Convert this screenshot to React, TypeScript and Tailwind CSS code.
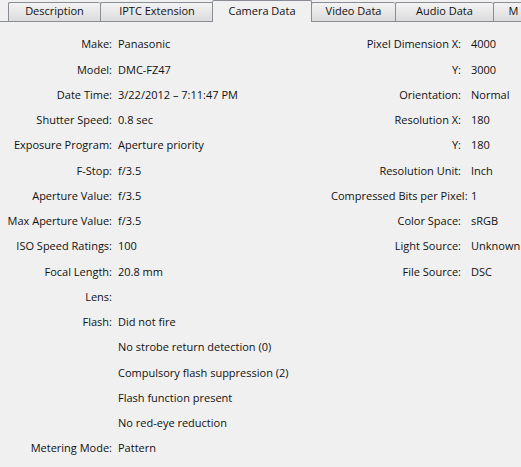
import React from "react";

type Row = { label: string; value: string };

const tabs = [
  { name: "Description", w: "w-[92px]" },
  { name: "IPTC Extension", w: "w-[113px]" },
  { name: "Camera Data", w: "w-[100px]", active: true },
  { name: "Video Data", w: "w-[84px]" },
  { name: "Audio Data", w: "w-[98px]" },
  { name: "M", w: "w-[40px]" },
];

const leftRows: Row[] = [
  { label: "Make:", value: "Panasonic" },
  { label: "Model:", value: "DMC-FZ47" },
  { label: "Date Time:", value: "3/22/2012 \u2013 7:11:47 PM" },
  { label: "Shutter Speed:", value: "0.8 sec" },
  { label: "Exposure Program:", value: "Aperture priority" },
  { label: "F-Stop:", value: "f/3.5" },
  { label: "Aperture Value:", value: "f/3.5" },
  { label: "Max Aperture Value:", value: "f/3.5" },
  { label: "ISO Speed Ratings:", value: "100" },
  { label: "Focal Length:", value: "20.8 mm" },
  { label: "Lens:", value: "" },
  { label: "Flash:", value: "Did not fire" },
  { label: "", value: "No strobe return detection (0)" },
  { label: "", value: "Compulsory flash suppression (2)" },
  { label: "", value: "Flash function present" },
  { label: "", value: "No red-eye reduction" },
  { label: "Metering Mode:", value: "Pattern" },
];

const rightRows: Row[] = [
  { label: "Pixel Dimension X:", value: "4000" },
  { label: "Y:", value: "3000" },
  { label: "Orientation:", value: "Normal" },
  { label: "Resolution X:", value: "180" },
  { label: "Y:", value: "180" },
  { label: "Resolution Unit:", value: "Inch" },
  { label: "Compressed Bits per Pixel:", value: "1" },
  { label: "Color Space:", value: "sRGB" },
  { label: "Light Source:", value: "Unknown" },
  { label: "File Source:", value: "DSC" },
];

function Field({ row, labelW, gap }: { row: Row; labelW: string; gap: string }) {
  return (
    <div className="flex h-[25.25px] items-center">
      <span className={`${labelW} shrink-0 text-right whitespace-nowrap`}>{row.label}</span>
      <span className={`${gap} whitespace-nowrap`}>{row.value}</span>
    </div>
  );
}

export default function App() {
  return (
    <div
      className="w-[521px] h-[467px] overflow-hidden bg-[#f0f0f0] text-[11px] text-[#111]"
      style={{ fontFamily: '"Open Sans", "Liberation Sans", sans-serif' }}
    >
      {/* tab strip */}
      <div className="flex h-[22px] items-end">
        <div className="w-[8px] h-[1px] bg-[#8a8d93] shrink-0" />
        {tabs.map((t) =>
          t.active ? (
            <div
              key={t.name}
              className={`${t.w} shrink-0 h-[22px] -mx-[1px] relative z-10 flex items-center justify-center border border-b-0 border-[#8a8d93] bg-[#f0f0f0] rounded-t-[2px]`}
            >
              {t.name}
            </div>
          ) : (
            <div
              key={t.name}
              className={`${t.w} shrink-0 h-[20px] flex items-center justify-center border border-[#8a8d93] border-r-0 bg-gradient-to-b from-[#f3f3f3] to-[#dcdcdc] rounded-t-[2px] pb-[1px]`}
            >
              {t.name}
            </div>
          )
        )}
      </div>

      {/* metadata columns */}
      <div className="flex pt-[10px]">
        <div className="w-[331px] shrink-0">
          {leftRows.map((r, i) => (
            <Field key={i} row={r} labelW="w-[112px]" gap="pl-[6px]" />
          ))}
        </div>
        <div>
          {rightRows.map((r, i) => (
            <Field key={i} row={r} labelW="w-[130px]" gap="pl-[10px]" />
          ))}
        </div>
      </div>
    </div>
  );
}
